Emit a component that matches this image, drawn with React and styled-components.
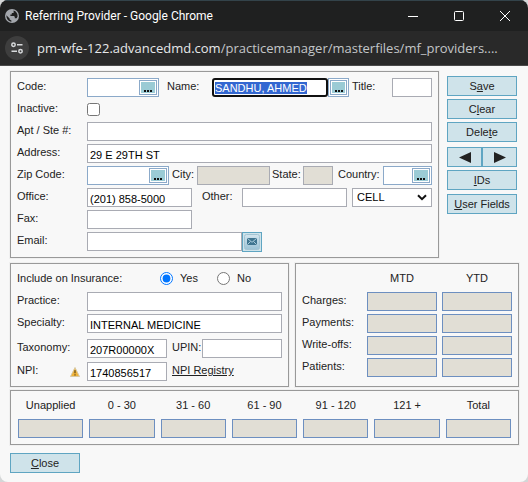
import React, { useEffect, useRef } from "react";
import styled, { createGlobalStyle } from "styled-components";

const Global = createGlobalStyle`
  *, *::before, *::after { box-sizing: border-box; }
  body {
    margin: 0;
    background: #d4d6d7;
    color: #222;
    font: 11px/17px "Liberation Sans", Arial, sans-serif;
  }
  button, input, select { font: inherit; color: #000; margin: 0; }
`;

const Window = styled.div`
  display: flex;
  flex-direction: column;
  min-height: 100vh;
  overflow: hidden;
  border-radius: 8px;
  background: #f8f8f8;
`;

const TitleBar = styled.header`
  display: flex;
  align-items: center;
  height: 31px;
  padding-left: 5px;
  gap: 6px;
  border-top: 1px solid #33434a;
  background: #1f2020;
  color: #fff;
  font: 12px/16px Roboto, "Open Sans", sans-serif;
`;

const WindowTitle = styled.h1`
  flex: 1;
  margin: 0;
  font: inherit;
`;

const WindowControls = styled.div`
  display: flex;
`;

const WindowButton = styled.button`
  display: grid;
  place-items: center;
  width: 46px;
  height: 30px;
  padding: 0;
  border: 0;
  background: none;
`;

const AddressBar = styled.div`
  display: flex;
  align-items: center;
  gap: 8px;
  height: 35px;
  padding: 0 5px;
  border-bottom: 1px solid #4a4a4a;
  background: #292929;
`;

const SiteButton = styled.button`
  display: grid;
  place-items: center;
  flex: none;
  width: 24px;
  height: 24px;
  padding: 0;
  border: 0;
  border-radius: 50%;
  background: #3e3e3e;
`;

const Url = styled.div`
  white-space: nowrap;
  color: #c3c6c8;
  font: 13px/20px "Open Sans", "Noto Sans", sans-serif;
`;

const Host = styled.span`
  color: #e6e8ea;
`;

const Content = styled.main`
  display: flex;
  flex-direction: column;
  padding: 5px 9px 9px 10px;
`;

const Top = styled.form`
  display: flex;
  gap: 8px;
  padding-right: 2px;
`;

const Middle = styled.div`
  display: flex;
  gap: 6px;
  margin: 5px 0 3px;
`;

const Panel = styled.section`
  flex: ${(p) => (p.$basis ? `${p.$basis} 1 ${p.$basis}px` : "1")};
  min-width: 0;
  padding: 6px 6px ${(p) => p.$bottom ?? 6}px;
  border: 1px solid #999;
  box-shadow: 0 0 0 1px #f0f0f0;
`;

const Row = styled.div`
  display: flex;
  align-items: flex-start;
  height: 19px;
  margin-top: ${(p) => p.$gap ?? 3}px;
  &:first-child { margin-top: 0; }
`;

const Label = styled.label`
  flex: none;
  width: ${(p) => p.$w || 70}px;
  padding-left: ${(p) => p.$pad || 0}px;
  white-space: nowrap;
`;

const Input = styled.input`
  flex: ${(p) => (p.$w ? "none" : "1")};
  width: ${(p) => p.$w || 20}px;
  min-width: 0;
  height: 19px;
  padding: 2px 2px 0;
  border: 1px solid #a9abb3;
  border-radius: 0;
  background: #fff;
  &:disabled { background: #e1ded5; }
  &::selection { background: #3367d1; color: #fff; }
`;

const NameInput = styled(Input)`
  padding: 1px 1px 0;
  &:focus {
    border: 2px solid #101010;
    border-radius: 3px;
    outline: none;
  }
`;

const Combo = styled.div`
  display: flex;
  flex: none;
  width: ${(p) => p.$w}px;
  height: 19px;
  padding: 1px;
  border: 1px solid #8ba9c9;
  background: #fff;
`;

const ComboInput = styled.input`
  flex: 1;
  width: 0;
  padding: 0 2px;
  border: 0;
  outline: none;
  background: none;
`;

const Picker = styled.button`
  display: flex;
  align-items: flex-end;
  justify-content: center;
  width: 18px;
  height: 15px;
  padding: 0 0 2px;
  border: 1px solid #8ba9c9;
  background: #9bcbd5;
  box-shadow: inset 0 0 0 1px #fff;
`;

const CheckBox = styled.input`
  width: 13px;
  height: 13px;
  margin: 3px 0 0;
`;

const Radio = styled.input`
  width: 13px;
  height: 13px;
  margin: 2px 7px 0 0;
`;

const Option = styled.label`
  display: flex;
  width: 57px;
`;

const SelectBox = styled.div`
  position: relative;
  width: 80px;
  margin-left: 5px;
  svg {
    position: absolute;
    right: 5px;
    top: 6px;
    pointer-events: none;
  }
`;

const Select = styled.select`
  appearance: none;
  display: block;
  width: 100%;
  height: 19px;
  padding: 0 4px;
  border: 1px solid #a9abb3;
  border-radius: 0;
  background: #fff;
`;

const MailButton = styled.button`
  display: grid;
  place-items: center;
  width: 20px;
  height: 20px;
  padding: 0;
  border: 1px solid #5fa5c2;
  background: #cfe3ea;
`;

const Side = styled.nav`
  display: flex;
  flex-direction: column;
  gap: 3px;
  width: 70px;
  padding-top: 5px;
`;

const Button = styled.button`
  width: ${(p) => p.$w || "70px"};
  height: 20px;
  padding: 0;
  border: 1px solid #5fa5c2;
  background: #cfe3ea;
  color: #222;
  line-height: 18px;
`;

const Arrows = styled.div`
  display: flex;
  margin-top: 2px;
  svg { display: block; margin: 0 auto; }
`;

const LastButton = styled(Button)`
  margin-top: 1px;
`;

const Warning = styled.svg`
  flex: none;
  width: 10px;
  height: 10px;
  margin: 5px 7px 0 0;
`;

const RegistryLink = styled.a`
  margin-left: 5px;
  color: #222;
`;

const Totals = styled.table`
  width: 100%;
  border-collapse: collapse;
  table-layout: fixed;
  th { padding: 0; font-weight: normal; }
  thead th { height: 22px; vertical-align: top; }
  tbody th { height: 22px; text-align: left; vertical-align: top; }
  td { height: 22px; padding: 0 0 0 5px; vertical-align: top; }
  thead th + th { padding-left: 5px; }
  th:first-child { width: 60px; }
`;

const Amount = styled.input`
  display: block;
  width: 100%;
  min-width: 0;
  height: 19px;
  padding: 0 2px;
  border: 1px solid #6d8fc0;
  background: #e1ded5;
`;

const Aging = styled.div`
  display: grid;
  grid-template-columns: repeat(7, 1fr);
  gap: 6px;
  padding: 0 1px;
`;

const AgingField = styled.label`
  display: flex;
  flex-direction: column;
  gap: 5px;
  text-align: center;
`;

const Footer = styled.footer`
  margin-top: 8px;
`;

function Dots({ name }) {
  return (
    <Picker type="button" aria-label={`Look up ${name}`}>
      <svg width="8" height="2" viewBox="0 0 8 2"><path d="M0 0h2v2H0zM3 0h2v2H3zM6 0h2v2H6z" fill="#111" /></svg>
    </Picker>
  );
}

function Lookup({ id, w, name }) {
  return (
    <Combo $w={w}>
      <ComboInput id={id} />
      <Dots name={name} />
    </Combo>
  );
}

const aging = ["Unapplied", "0 - 30", "31 - 60", "61 - 90", "91 - 120", "121 +", "Total"];
const totals = ["Charges", "Payments", "Write-offs", "Patients"];

export default function App() {
  const nameRef = useRef(null);
  useEffect(() => {
    nameRef.current.focus();
    nameRef.current.select();
  }, []);

  return (
    <>
      <Global />
      <Window>
        <TitleBar>
          <svg width="14" height="14" viewBox="0 0 14 14">
            <circle cx="7" cy="7" r="7" fill="#a3a7ad" />
            <path d="M1.4 6.2 4.6 9.4V10.6L6.4 11.4V12.7C3.4 12.4 1.3 9.8 1.4 6.2ZM8.6 1.6C11.2 2.4 12.7 4.6 12.6 7.4L11.6 9.3H9.8V7.8L8.8 7H5.4V5.4H6.8V4H8.6Z" fill="#1f2020" />
          </svg>
          <WindowTitle>Referring Provider - Google Chrome</WindowTitle>
          <WindowControls>
            <WindowButton aria-label="Minimize">
              <svg width="10" height="10"><path d="M0 5.5h10" stroke="#fff" /></svg>
            </WindowButton>
            <WindowButton aria-label="Maximize">
              <svg width="10" height="10"><rect x=".5" y=".5" width="9" height="9" rx="1" fill="none" stroke="#fff" /></svg>
            </WindowButton>
            <WindowButton aria-label="Close window">
              <svg width="10" height="10"><path d="M0 0l10 10M10 0L0 10" stroke="#fff" /></svg>
            </WindowButton>
          </WindowControls>
        </TitleBar>
        <AddressBar>
          <SiteButton aria-label="View site information">
            <svg width="12" height="12" viewBox="0 0 12 12" fill="none" stroke="#d8dadc" strokeWidth="1.5">
              <circle cx="2.5" cy="2.8" r="1.7" /><path d="M6 2.8h5.5M.5 9.2H6" /><circle cx="9.5" cy="9.2" r="1.7" />
            </svg>
          </SiteButton>
          <Url><Host>pm-wfe-122.advancedmd.com</Host>/practicemanager/masterfiles/mf_providers....</Url>
        </AddressBar>

        <Content>
          <Top>
            <Panel>
              <Row>
                <Label htmlFor="code">Code:</Label>
                <Lookup id="code" w={72} name="code" />
                <Label htmlFor="name" $w={53} $pad={8}>Name:</Label>
                <NameInput id="name" ref={nameRef} defaultValue="SANDHU, AHMED" spellCheck={false} />
                <Combo $w={21}><Dots name="name" /></Combo>
                <Label htmlFor="title" $w={43} $pad={3}>Title:</Label>
                <Input id="title" $w={40} />
              </Row>
              <Row>
                <Label htmlFor="inactive">Inactive:</Label>
                <CheckBox id="inactive" type="checkbox" />
              </Row>
              <Row>
                <Label htmlFor="apt">Apt / Ste #:</Label>
                <Input id="apt" />
              </Row>
              <Row>
                <Label htmlFor="address">Address:</Label>
                <Input id="address" defaultValue="29 E 29TH ST" />
              </Row>
              <Row>
                <Label htmlFor="zip">Zip Code:</Label>
                <Lookup id="zip" w={82} name="zip code" />
                <Label htmlFor="city" $w={28} $pad={3}>City:</Label>
                <Input id="city" disabled />
                <Label htmlFor="state" $w={33} $pad={2}>State:</Label>
                <Input id="state" $w={30} disabled />
                <Label htmlFor="country" $w={50} $pad={5}>Country:</Label>
                <Lookup id="country" w={49} name="country" />
              </Row>
              <Row>
                <Label htmlFor="office">Office:</Label>
                <Input id="office" $w={105} defaultValue="(201) 858-5000" />
                <Label htmlFor="other" $w={50} $pad={10}>Other:</Label>
                <Input id="other" />
                <SelectBox>
                  <Select aria-label="Other phone type"><option>CELL</option></Select>
                  <svg width="10" height="7" viewBox="0 0 10 7"><path d="M1 1.2l4 4 4-4" fill="none" stroke="#111" strokeWidth="2" /></svg>
                </SelectBox>
              </Row>
              <Row>
                <Label htmlFor="fax">Fax:</Label>
                <Input id="fax" $w={105} />
              </Row>
              <Row>
                <Label htmlFor="email">Email:</Label>
                <Input id="email" $w={155} />
                <MailButton type="button" aria-label="Send email">
                  <svg width="16" height="16" viewBox="0 0 16 16">
                    <defs><linearGradient id="mail" x2="0" y2="1"><stop stopColor="#d3e5ee" /><stop offset="1" stopColor="#9cc3d6" /></linearGradient></defs>
                    <rect x=".5" y=".5" width="15" height="15" rx="2" fill="url(#mail)" stroke="#a3c4d3" />
                    <rect x="3" y="4" width="10" height="7" rx="1" fill="#3f7590" />
                    <path d="M3.5 4.5L8 8.3l4.5-3.8M3.5 10.5l3-3M12.5 10.5l-3-3" fill="none" stroke="#b9d6e3" strokeWidth=".9" />
                  </svg>
                </MailButton>
              </Row>
            </Panel>
            <Side>
              <Button type="button" accessKey="a">S<u>a</u>ve</Button>
              <Button type="button" accessKey="l">C<u>l</u>ear</Button>
              <Button type="button" accessKey="t">Dele<u>t</u>e</Button>
              <Arrows>
                <Button type="button" $w="50%" aria-label="Previous">
                  <svg width="12" height="11"><path d="M12 0v11L0 5.5z" fill="#222" /></svg>
                </Button>
                <Button type="button" $w="50%" aria-label="Next">
                  <svg width="12" height="11"><path d="M0 0v11l12-5.5z" fill="#222" /></svg>
                </Button>
              </Arrows>
              <Button type="button" accessKey="i"><u>I</u>Ds</Button>
              <LastButton type="button" accessKey="u"><u>U</u>ser Fields</LastButton>
            </Side>
          </Top>

          <Middle>
            <Panel $basis={279} $bottom={5}>
              <Row role="radiogroup" aria-label="Include on Insurance">
                <Label as="span" $w={143}>Include on Insurance:</Label>
                <Option><Radio type="radio" name="insurance" defaultChecked />Yes</Option>
                <Option><Radio type="radio" name="insurance" />No</Option>
              </Row>
              <Row>
                <Label htmlFor="practice">Practice:</Label>
                <Input id="practice" />
              </Row>
              <Row>
                <Label htmlFor="specialty">Specialty:</Label>
                <Input id="specialty" defaultValue="INTERNAL MEDICINE" />
              </Row>
              <Row $gap={6}>
                <Label htmlFor="taxonomy">Taxonomy:</Label>
                <Input id="taxonomy" $w={80} defaultValue="207R00000X" />
                <Label htmlFor="upin" $w={35} $pad={5}>UPIN:</Label>
                <Input id="upin" />
              </Row>
              <Row $gap={4}>
                <Label htmlFor="npi" $w={53}>NPI:</Label>
                <Warning viewBox="0 0 10 10" aria-hidden="true">
                  <path d="M5 .5l4.5 9h-9z" fill="#f0b43c" stroke="#d8c9a4" strokeLinejoin="round" />
                  <path d="M5 3.2v3M5 7.2v1.3" stroke="#5b4517" strokeWidth="1.2" />
                </Warning>
                <Input id="npi" $w={80} defaultValue="1740856517" />
                <RegistryLink href="#npi">NPI Registry</RegistryLink>
              </Row>
            </Panel>
            <Panel $basis={224} $bottom={5}>
              <Totals>
                <thead>
                  <tr><th aria-label="Measure" /><th scope="col">MTD</th><th scope="col">YTD</th></tr>
                </thead>
                <tbody>
                  {totals.map((t) => (
                    <tr key={t}>
                      <th scope="row">{t}:</th>
                      <td><Amount aria-label={`${t} MTD`} disabled /></td>
                      <td><Amount aria-label={`${t} YTD`} disabled /></td>
                    </tr>
                  ))}
                </tbody>
              </Totals>
            </Panel>
          </Middle>

          <Panel>
            <Aging>
              {aging.map((a) => (
                <AgingField key={a}>{a}<Amount disabled /></AgingField>
              ))}
            </Aging>
          </Panel>

          <Footer>
            <Button type="button" accessKey="c"><u>C</u>lose</Button>
          </Footer>
        </Content>
      </Window>
    </>
  );
}
